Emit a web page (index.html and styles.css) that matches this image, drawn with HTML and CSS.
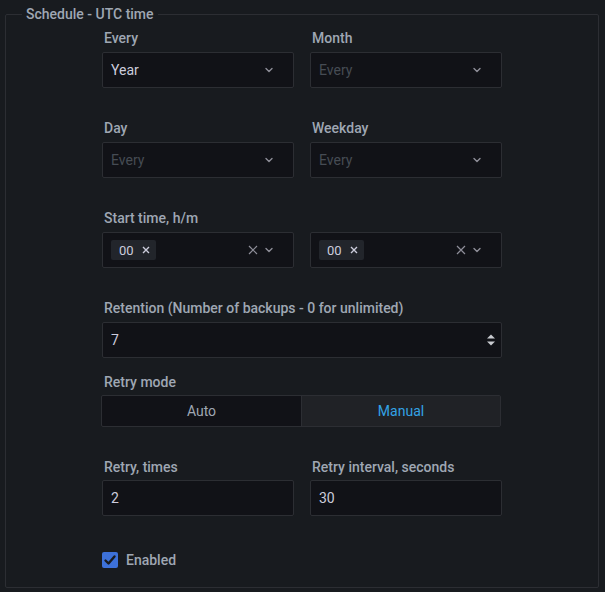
FILE: index.html
```html
<!DOCTYPE html>
<html>
<head>
<meta charset="utf-8">
<link rel="stylesheet" href="styles.css">
</head>
<body>
<fieldset class="panel">
  <legend class="legend">Schedule - UTC time</legend>
  <div class="form">
    <div class="row two">
      <div class="field">
        <div class="label">Every</div>
        <div class="select"><span class="value">Year</span><svg class="chev" viewBox="0 0 16 16"><path d="M5 6.5l3 3 3-3"/></svg></div>
      </div>
      <div class="field">
        <div class="label">Month</div>
        <div class="select"><span class="placeholder">Every</span><svg class="chev" viewBox="0 0 16 16"><path d="M5 6.5l3 3 3-3"/></svg></div>
      </div>
    </div>
    <div class="row two">
      <div class="field">
        <div class="label">Day</div>
        <div class="select"><span class="placeholder">Every</span><svg class="chev" viewBox="0 0 16 16"><path d="M5 6.5l3 3 3-3"/></svg></div>
      </div>
      <div class="field">
        <div class="label">Weekday</div>
        <div class="select"><span class="placeholder">Every</span><svg class="chev" viewBox="0 0 16 16"><path d="M5 6.5l3 3 3-3"/></svg></div>
      </div>
    </div>
    <div class="row">
      <div class="label">Start time, h/m</div>
      <div class="two">
        <div class="select">
          <span class="chip">00<svg class="chipx" viewBox="0 0 8 8"><path d="M1 1l6 6M7 1l-6 6"/></svg></span>
          <span class="grow"></span>
          <svg class="clear" viewBox="0 0 10 10"><path d="M1 1l8 8M9 1l-8 8"/></svg>
          <svg class="chev tight" viewBox="0 0 16 16"><path d="M5 6.5l3 3 3-3"/></svg>
        </div>
        <div class="select">
          <span class="chip">00<svg class="chipx" viewBox="0 0 8 8"><path d="M1 1l6 6M7 1l-6 6"/></svg></span>
          <span class="grow"></span>
          <svg class="clear" viewBox="0 0 10 10"><path d="M1 1l8 8M9 1l-8 8"/></svg>
          <svg class="chev tight" viewBox="0 0 16 16"><path d="M5 6.5l3 3 3-3"/></svg>
        </div>
      </div>
    </div>
    <div class="row short">
      <div class="label">Retention (Number of backups - 0 for unlimited)</div>
      <div class="input wide"><span class="value">7</span><svg class="spin" viewBox="0 0 8 12"><path d="M4 0.5L8 4.5H0z M4 11.5L0 7.5H8z"/></svg></div>
    </div>
    <div class="row">
      <div class="label tightlabel">Retry mode</div>
      <div class="radios">
        <div class="radio">Auto</div>
        <div class="radio active">Manual</div>
      </div>
    </div>
    <div class="row two retry">
      <div class="field">
        <div class="label tightlabel">Retry, times</div>
        <div class="input"><span class="value">2</span></div>
      </div>
      <div class="field">
        <div class="label tightlabel">Retry interval, seconds</div>
        <div class="input"><span class="value">30</span></div>
      </div>
    </div>
    <label class="check">
      <span class="box"><svg viewBox="0 0 16 16"><path d="M3.5 8.5l3 3 6-7"/></svg></span>
      <span class="checktext">Enabled</span>
    </label>
  </div>
</fieldset>
</body>
</html>
```

FILE: styles.css
```css
html, body {
  margin: 0;
  padding: 0;
  background: #181b1f;
  font-family: Roboto, "Liberation Sans", sans-serif;
  font-size: 14px;
  color: #ccccdc;
}
body {
  width: 605px;
  height: 592px;
  overflow: hidden;
}
.panel {
  margin: 4px 6px 0 5px;
  height: 584px;
  box-sizing: border-box;
  border: 1px solid #2c2e33;
  border-radius: 2px;
  padding: 0;
  min-width: 0;
}
.legend {
  margin-left: 16px;
  padding: 0 4px;
  font-size: 14px;
  line-height: 20px;
  font-weight: 500;
  color: #9fa7b3;
}
.form {
  width: 400px;
  margin-left: 96px;
  padding-top: 5px;
  display: flex;
  flex-direction: column;
}
.row {
  margin-bottom: 31px;
}
.row.short {
  margin-bottom: 15px;
}
.row.retry {
  margin-bottom: 35px;
}
.two {
  display: grid;
  grid-template-columns: 192px 192px;
  column-gap: 16px;
}
.label {
  font-size: 14px;
  line-height: 18px;
  font-weight: 500;
  color: #9fa7b3;
  margin-bottom: 5px;
  padding-left: 2px;
}
.label.tightlabel {
  margin-bottom: 4px;
}
.select, .input {
  height: 36px;
  box-sizing: border-box;
  background: #111217;
  border: 1px solid #2c2e33;
  border-radius: 2px;
  display: flex;
  align-items: center;
  padding: 0 16px 0 8px;
}
.input {
  padding-right: 6px;
}
.input.wide {
  width: 400px;
}
.value {
  color: #ccccdc;
  flex: 1;
}
.placeholder {
  color: #464c54;
  flex: 1;
}
.chev {
  width: 16px;
  height: 16px;
  fill: none;
  stroke: #8e8e99;
  stroke-width: 1.4;
  stroke-linecap: round;
  stroke-linejoin: round;
}
.chip {
  flex: 0 0 auto;
  display: inline-flex;
  align-items: center;
  height: 20px;
  padding: 0 6px 0 8px;
  background: #22252b;
  border-radius: 2px;
  font-size: 13px;
  color: #ccccdc;
}
.chipx {
  width: 8px;
  height: 8px;
  margin-left: 8px;
  fill: none;
  stroke: #ccccdc;
  stroke-width: 1.4;
}
.grow {
  flex: 1;
}
.clear {
  width: 10px;
  height: 10px;
  fill: none;
  stroke: #8e8e99;
  stroke-width: 1.2;
  margin-right: 3px;
}
.spin {
  width: 8px;
  height: 12px;
  fill: #c9cbd1;
}
.radios {
  display: grid;
  grid-template-columns: 1fr 1fr;
  width: 400px;
  height: 32px;
  box-sizing: border-box;
  border: 1px solid #2c2e33;
  border-radius: 2px;
  background: #111217;
  margin-left: -1px;
}
.radio {
  display: flex;
  align-items: center;
  justify-content: center;
  color: #9fa7b3;
  font-size: 14px;
}
.radio.active {
  background: #202226;
  color: #33a2e5;
  border-left: 1px solid #2c2e33;
}
.check {
  display: flex;
  align-items: center;
  gap: 8px;
}
.box {
  width: 16px;
  height: 16px;
  border-radius: 2px;
  background: #3d71d9;
  display: flex;
}
.box svg {
  width: 16px;
  height: 16px;
  fill: none;
  stroke: #181b1f;
  stroke-width: 2.4;
  stroke-linecap: round;
  stroke-linejoin: round;
}
.checktext {
  color: #9fa7b3;
  font-weight: 500;
  line-height: 18px;
}
```
